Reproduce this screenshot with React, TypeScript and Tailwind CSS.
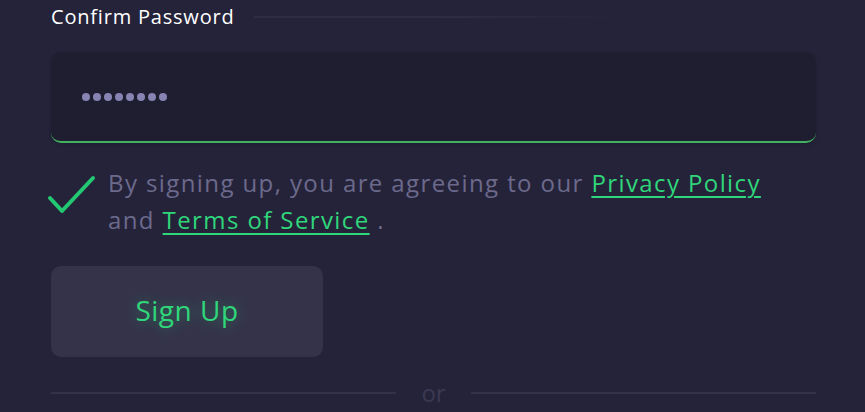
export default function App() {
  return (
    <div
      className="w-[865px] h-[412px] overflow-hidden bg-[#25233a] px-[51px]"
      style={{ fontFamily: '"Open Sans", "Noto Sans", sans-serif' }}
    >
      {/* Label */}
      <div className="flex items-center gap-[19px] h-[34px]">
        <span className="text-[20px] font-medium tracking-[0.8px] text-white whitespace-nowrap">Confirm Password</span>
        <div className="h-[2px] w-[370px] bg-gradient-to-r from-[#2f2d45] via-[#2f2d45] to-transparent" />
      </div>

      {/* Input */}
      <div className="mt-[18px] h-[91px] w-[765px] rounded-[10px] bg-[#1f1e30] border-b-[2px] border-[#3fb15f] flex items-center pl-[31px] shadow-[0_2px_4px_rgba(0,0,0,0.15)]">
        <div className="flex gap-[3px]">
          {Array.from({ length: 8 }).map((_, i) => (
            <span key={i} className="w-[8px] h-[8px] rounded-full bg-[#8784b3]" />
          ))}
        </div>
      </div>

      {/* Terms */}
      <div className="mt-[21px] flex items-start">
        <svg width="50" height="42" viewBox="0 0 50 42" className="-ml-[4px] mt-[10px] shrink-0">
          <path d="M3 24 L15 37 L46 4" fill="none" stroke="#22c872" strokeWidth="4" strokeLinecap="round" strokeLinejoin="round" />
        </svg>
        <p className="ml-[11px] text-[24px] leading-[37px] tracking-[1.4px] text-[#6c6a8c]">
          By signing up, you are agreeing to our{" "}
          <a className="text-[#2fd67a] underline underline-offset-[4px] decoration-[2px]">Privacy Policy</a>
          <br />
          and{" "}
          <a className="text-[#2fd67a] underline underline-offset-[4px] decoration-[2px]">Terms of Service</a> .
        </p>
      </div>

      {/* Button */}
      <button className="mt-[28px] w-[272px] h-[91px] rounded-[10px] bg-[#35334a] flex items-center justify-center">
        <span
          className="text-[28px] font-medium tracking-[0.5px] text-[#2fd67a] -mt-[4px]"
          style={{ textShadow: "0 0 14px rgba(47,214,122,0.45)" }}
        >
          Sign Up
        </span>
      </button>

      {/* Divider */}
      <div className="mt-[24px] flex items-center w-[765px]">
        <div className="flex-1 h-[2px] bg-[#34324a]" />
        <span className="px-[25px] text-[24px] text-[#3b3952] leading-none">or</span>
        <div className="flex-1 h-[2px] bg-[#34324a]" />
      </div>
    </div>
  );
}
